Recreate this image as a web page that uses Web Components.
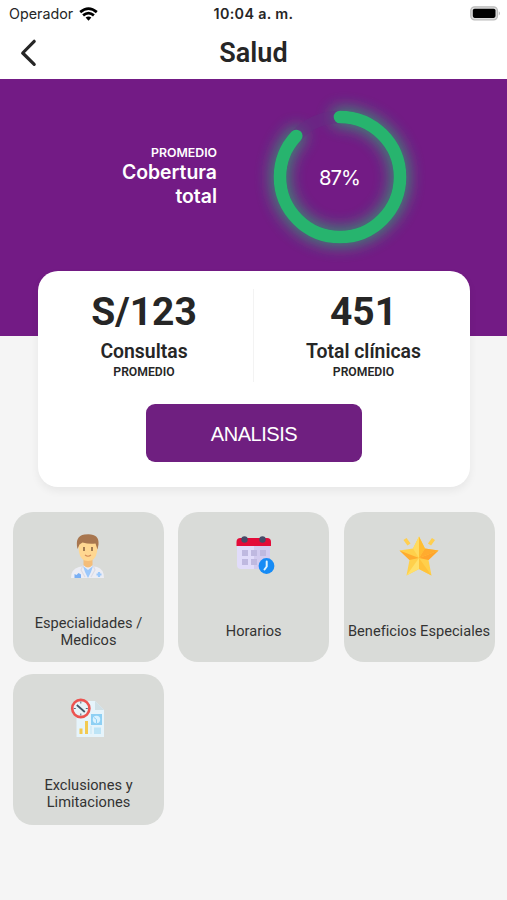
<!DOCTYPE html>
<html lang="es">
<head>
<meta charset="utf-8">
<meta name="viewport" content="width=device-width, initial-scale=1">
<title>Salud</title>
<style>
  body {
    margin: 0;
    background: #f5f5f5;
    color: #262626;
    font-family: Roboto, "Liberation Sans", sans-serif;
  }
</style>
</head>
<body>
<salud-app></salud-app>

<script>
const define = (name, html) => {
  const template = document.createElement('template');
  template.innerHTML = html;

  customElements.define(name, class extends HTMLElement {
    constructor() {
      super();
      this.attachShadow({ mode: 'open' });
      this.shadowRoot.appendChild(template.content.cloneNode(true));
    }
  });
};

define('status-bar', `
<style>
  :host {
    display: grid;
    grid-template-columns: 1fr auto 1fr;
    align-items: center;
    height: 27px;
    padding: 0 9px;
    box-sizing: border-box;
    font: 400 14.3px Inter, sans-serif;
  }
  .carrier { display: flex; align-items: center; gap: 6px; }
  .time { font-weight: 600; font-size: 14.3px; letter-spacing: 0.35px; }
  .battery { justify-self: end; margin-right: -3px; }
  svg { display: block; }
</style>
<span class="carrier"><span>Operador</span>
  <svg width="19" height="14" viewBox="0 0 19 14" fill="none" stroke="#000" stroke-width="2.7">
    <path d="M1.2 5.1Q9.5-2 17.8 5.1M4.1 8.4Q9.5 3.8 14.9 8.4"/>
    <path d="M6.6 10.6Q9.5 8.2 12.4 10.6L9.5 13.7Z" fill="#000" stroke="none"/>
  </svg>
</span>
<span class="time">10:04 a. m.</span>
<svg class="battery" width="31" height="15" viewBox="0 0 31 15">
  <rect x=".8" y=".8" width="26.6" height="13" rx="3.8" fill="#ddd" stroke="#bbb" stroke-width="1.3"/>
  <rect x="2.8" y="2.7" width="22.7" height="9.2" rx="1.8"/>
  <path d="M28.8 5.2q2 2.1 0 4.2z" fill="#aaa"/>
</svg>
`);

define('page-header', `
<style>
  :host {
    display: grid;
    grid-template-columns: 57px 1fr 57px;
    align-items: center;
    height: 52px;
    padding-bottom: 1px;
    box-sizing: border-box;
  }
  svg { display: block; margin: 1px 0 0 19px; }
  h1 { margin: 0; text-align: center; font-size: 27px; font-weight: 600; line-height: 32px; }
</style>
<svg width="20" height="28" viewBox="0 0 20 28" fill="none" stroke="#262626" stroke-width="3.2" stroke-linecap="round" stroke-linejoin="round">
  <path d="M15.2 2.3L3.7 14L15.2 25.4"/>
</svg>
<h1><slot></slot></h1>
`);

define('coverage-hero', `
<style>
  :host {
    display: flex;
    height: 256.5px;
    background: #731b85;
    color: #fff;
    font-family: Inter, sans-serif;
  }
  .text {
    width: 217px;
    padding-top: 66px;
    box-sizing: border-box;
    text-align: right;
    font-weight: 600;
  }
  .over { font-size: 12.3px; line-height: 16px; }
  .title { font-size: 19.4px; line-height: 23.5px; }
  svg { display: block; margin-left: 22.5px; overflow: visible; }
</style>
<div class="text">
  <div class="over"><slot name="over"></slot></div>
  <div class="title"><slot></slot></div>
</div>
<svg width="200" height="196" viewBox="0 0 200 196">
  <defs>
    <filter id="glow" x="-30%" y="-30%" width="160%" height="160%"><feGaussianBlur stdDeviation="8"/></filter>
  </defs>
  <g fill="none" stroke="#27b46e" stroke-linecap="round" transform="rotate(-90 100 98)">
    <circle cx="100" cy="98" r="60" pathLength="100" stroke-dasharray="87 100" stroke-width="18" opacity=".75" filter="url(#glow)"/>
    <circle cx="100" cy="98" r="60" stroke="#652b83" stroke-width="12.6" opacity=".5"/>
    <circle cx="100" cy="98" r="60" pathLength="100" stroke-dasharray="87 100" stroke-width="12.6"/>
  </g>
  <text x="100" y="105.5" text-anchor="middle" font-size="20.3" textLength="42" fill="#fff">87%</text>
</svg>
`);

define('stat-item', `
<style>
  :host { display: block; text-align: center; }
  .value { font-size: 39px; font-weight: 700; line-height: 47px; }
  .label { margin-top: 3px; font-size: 19.4px; font-weight: 600; line-height: 25px; }
  .note { font-size: 12.2px; font-weight: 600; line-height: 17px; }
</style>
<div class="value"><slot></slot></div>
<div class="label"><slot name="label"></slot></div>
<div class="note"><slot name="note"></slot></div>
`);

define('summary-card', `
<style>
  :host {
    display: block;
    position: relative;
    width: 432px;
    height: 216.5px;
    margin: -65px 0 0 38px;
    padding-top: 18px;
    box-sizing: border-box;
    border-radius: 20px;
    background: #fff;
    box-shadow: 0 4px 8px rgba(0, 0, 0, .06);
  }
  .stats { display: grid; grid-template-columns: 212px 1px 1fr; column-gap: 3px; padding-right: -3px; height: 93px; }
  .line { background: #f3f3f3; }
  button {
    display: block;
    width: 216px;
    height: 58.5px;
    margin: 22px auto 0;
    border: 0;
    border-radius: 9px;
    background: #6f1f80;
    color: #fff;
    font: 20px "Liberation Sans", sans-serif;
    letter-spacing: -.45px;
    padding: 3px 0 0;
  }
</style>
<div class="stats">
  <slot name="first"></slot>
  <div class="line"></div>
  <slot name="second"></slot>
</div>
<button type="button"><slot></slot></button>
`);

define('menu-tile', `
<style>
  :host {
    display: grid;
    grid-template-rows: 88px 62px;
    height: 150.5px;
    border-radius: 20px;
    background: #d9dbd8;
    color: #333;
  }
  .icon { display: grid; place-items: center; }
  .label {
    display: flex;
    align-items: center;
    justify-content: center;
    text-align: center;
    font-size: 14.6px;
    line-height: 17px;
    padding-top: 2px;
    letter-spacing: .02px;
  }
</style>
<div class="icon"><slot name="icon"></slot></div>
<div class="label"><span><slot></slot></span></div>
`);

define('doctor-icon', `
<style>:host, svg { display: block; }</style>
<svg width="60" height="60" viewBox="0 0 60 60">
  <path d="M12 52q0-9 8-11l5-1h7l6 1q7 2 7 11z" fill="#ecedf4"/>
  <path d="M24 40l5 4 5-4-2 6-3 6-3-6z" fill="#9bc8fb"/>
  <path d="M24 39l-2 5 4 7M34 39l2 5-4 7" fill="none" stroke="#dddce5" stroke-width="1.2"/>
  <path d="M24.5 31h9v8q-4.5 5-9 0z" fill="#f4bd79"/>
  <path d="M19 18q-1-9 10-9t10 9l-1 8q-1.5 9-9 9t-9-9z" fill="#ffd791"/>
  <path d="M18.5 23q-3-13 7-14.5 15-2 14 10l-1 5-2-6q-6 1-13-1l-3 2z" fill="#a8764f"/>
  <path d="M25 21v4M33 21v4" stroke="#835d3e" stroke-width="1.5"/>
  <path d="M26 29q3 2.500 6 0" fill="none" stroke="#d48c58" stroke-width="1.1"/>
  <path d="M15.500 48l2 1 2-2 2.500 1.500V52h-6.500z" fill="#79aff4"/>
  <path d="M40 46v5M37.500 48.500h5" stroke="#9bc8fb" stroke-width="2.200"/>
</svg>
`);

define('calendar-icon', `
<style>:host, svg { display: block; }</style>
<svg width="60" height="60" viewBox="0 0 60 60">
  <path d="M13 20h33v19q0 4-4 4H17q-4 0-4-4z" fill="#e1dcfa"/>
  <path d="M30 20h16v23H30z" fill="#d2cbef"/>
  <path d="M12.500 20v-4q0-4 4-4H43q4 0 4 4v4z" fill="#e30b39"/>
  <g fill="#bfb9e0">
    <path d="M18 24h6v6h-6zM27 24h6v6h-6zM36 24h6v6h-6zM18 33h6v6h-6zM27 33h6v6h-6z"/>
  </g>
  <circle cx="20.500" cy="13.500" r="3.200" fill="#454b68"/><circle cx="38.500" cy="13.500" r="3.200" fill="#454b68"/>
  <circle cx="42.500" cy="40" r="7.900" fill="#168bf5"/>
  <path d="M42.700 35.500v5l-2.200 3" fill="none" stroke="#dff3ff" stroke-width="2" stroke-linecap="round"/>
</svg>
`);

define('star-icon', `
<style>:host, svg { display: block; }</style>
<svg width="60" height="60" viewBox="0 0 60 60" stroke-linejoin="round">
  <path d="M30 10.500l6 12 13.500 2-10 9.500 3 15.500L30 43l-12.500 6.500 3-15.500-10-9.500 13.500-2z" fill="#ffd04b"/>
  <path d="M30 10.500l6 12-6 9.500z" fill="#ffbd32"/>
  <path d="M49.500 24.500L30 32l6-9.500zM10.500 24.500L30 32l-9.500 2z" fill="#ffab2e"/>
  <path d="M49.500 24.500L30 32l9.500 2z" fill="#ffa42c"/>
  <path d="M30 32l12.500 17.500L30 43z" fill="#ffc23a"/>
  <path d="M30 32v11l-12.500 6.500z" fill="#ffe06a"/>
  <path d="M30 10.500l-6 12 6 9.500z" fill="#ffdb60"/>
  <path d="M16 13l4 5.500M44.500 13l-4 5.500" stroke="#ffcf50" stroke-width="3.800"/>
</svg>
`);

define('report-icon', `
<style>:host, svg { display: block; }</style>
<svg width="60" height="60" viewBox="0 0 60 60">
  <path d="M17.500 13H36l9 9v27H17.500z" fill="#e6f4fb"/>
  <path d="M36 13v9h9z" fill="#d0e0e6"/>
  <path d="M32 26h11v11H32z" fill="#8ed0f4"/>
  <circle cx="37.500" cy="31.500" r="3.700" fill="#d9f2ff"/>
  <path d="M35 29.500l2.500 2v3.500" fill="none" stroke="#8ed0f4"/>
  <path d="M35 39.500h7V46h-7z" fill="#bde4f6"/>
  <path d="M32 38v8" stroke="#c5e6f5"/>
  <path d="M20.500 40.500h3V46h-3zM26 33h3v13h-3z" fill="#f3ca51"/>
  <circle cx="21.800" cy="20.500" r="8.600" fill="#e7f2f7" stroke="#ec5350" stroke-width="2.600"/>
  <path d="M21.800 13.500v2M21.800 25.500v2M14.800 20.500h2M26.800 20.500h2" stroke="#56697a"/>
  <path d="M17.800 17l8 7" stroke="#415567" stroke-width="1.700"/>
</svg>
`);

define('salud-app', `
<style>
  :host { display: block; width: 507px; height: 900px; overflow: hidden; }
  header { background: #fff; }
  .menu {
    display: grid;
    grid-template-columns: repeat(3, 151px);
    justify-content: space-between;
    gap: 12px 0;
    padding: 24.5px 12.5px 0 13px;
  }
</style>
<header>
  <status-bar></status-bar>
  <page-header>Salud</page-header>
</header>
<coverage-hero><span slot="over">PROMEDIO</span>Cobertura<br>total</coverage-hero>
<summary-card>
  <stat-item slot="first">S/123<span slot="label">Consultas</span><span slot="note">PROMEDIO</span></stat-item>
  <stat-item slot="second">451<span slot="label">Total clínicas</span><span slot="note">PROMEDIO</span></stat-item>
  ANALISIS
</summary-card>
<div class="menu">
  <menu-tile><doctor-icon slot="icon"></doctor-icon>Especialidades /<br>Medicos</menu-tile>
  <menu-tile><calendar-icon slot="icon"></calendar-icon>Horarios</menu-tile>
  <menu-tile><star-icon slot="icon"></star-icon>Beneficios Especiales</menu-tile>
  <menu-tile><report-icon slot="icon"></report-icon>Exclusiones y<br>Limitaciones</menu-tile>
</div>
`);
</script>
</body>
</html>
